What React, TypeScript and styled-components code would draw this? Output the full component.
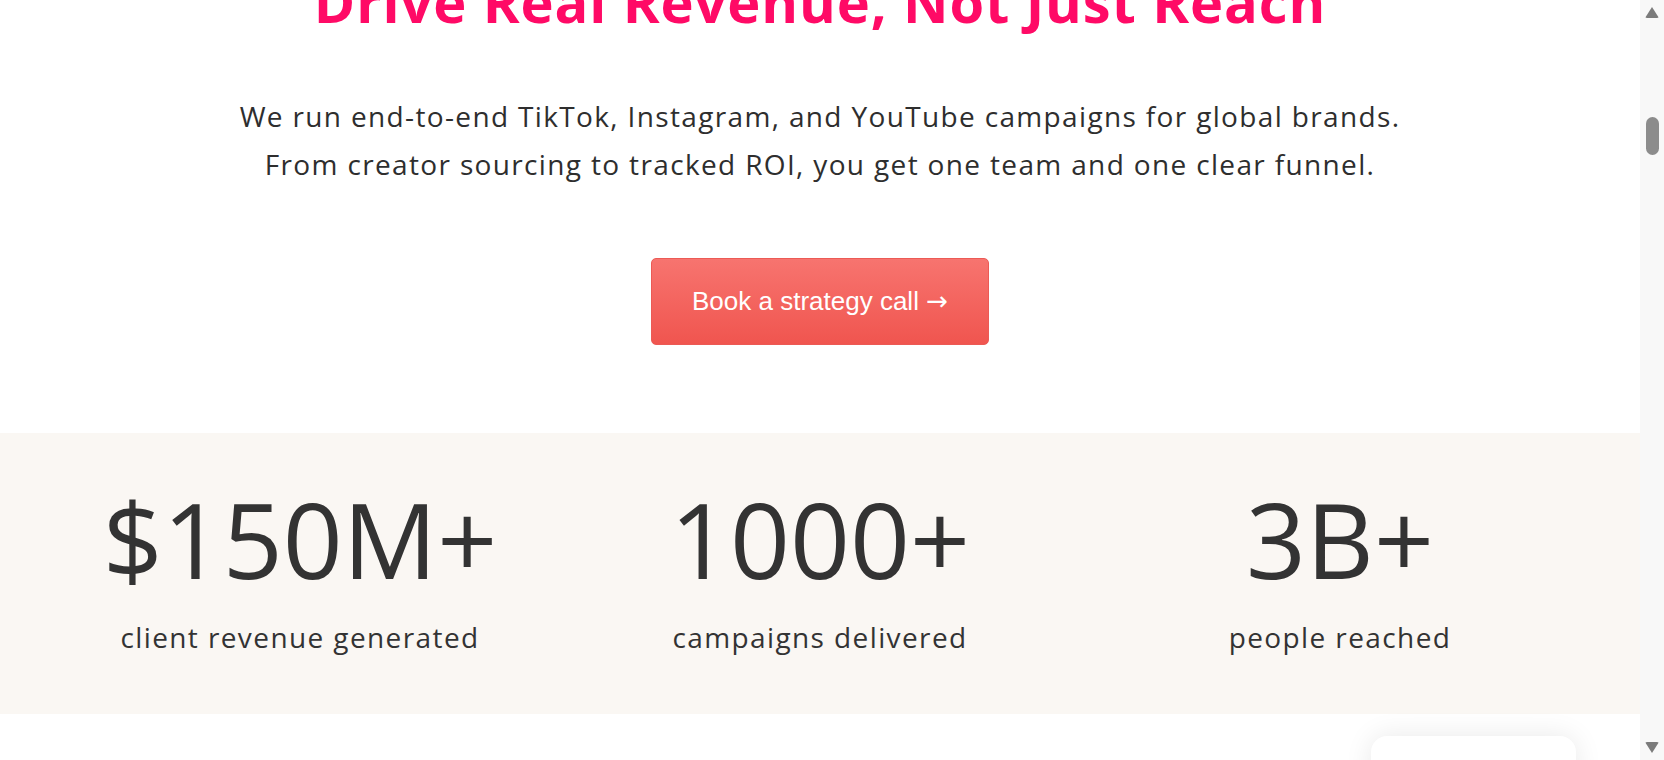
import React from "react";
import styled, { createGlobalStyle } from "styled-components";

const Global = createGlobalStyle`
  html, body {
    margin: 0;
    padding: 0;
    background: #ffffff;
    overflow: hidden;
  }
  body {
    font-family: "Open Sans", "Noto Sans", Arial, sans-serif;
    color: #333333;
  }
  * { box-sizing: border-box; }
`;

const Frame = styled.div`
  display: flex;
  width: 100%;
  height: 760px;
  overflow: hidden;
`;

const Main = styled.main`
  position: relative;
  flex: 1;
  min-width: 0;
  overflow: hidden;
`;

/* scroll offset of the page: the heading is partly above the fold */
const Page = styled.div`
  margin-top: -32px;
`;

const Hero = styled.section`
  display: flex;
  flex-direction: column;
  align-items: center;
  padding-bottom: 88px;
`;

const Title = styled.h1`
  margin: 0;
  font-family: "Open Sans", "Noto Sans", sans-serif;
  font-weight: 700;
  font-size: 56px;
  line-height: 67px;
  letter-spacing: 0.9px;
  color: #ff0a66;
  text-align: center;
`;

const Lead = styled.p`
  margin: 57px 0 0;
  font-size: 28px;
  line-height: 48px;
  font-weight: 400;
  letter-spacing: 1.35px;
  color: #2e2e2e;
  text-align: center;
`;

const CTA = styled.button`
  margin-top: 70px;
  padding: 28px 40px;
  border: 1px solid #ec5a55;
  border-radius: 5px;
  background: linear-gradient(180deg, #f7746f 0%, #f0554f 100%);
  color: #ffffff;
  font-family: "Liberation Sans", Arial, sans-serif;
  font-size: 26px;
  line-height: 29px;
  cursor: pointer;
`;

const CTAArrow = styled.span`
  font-family: "DejaVu Sans", sans-serif;
  font-size: 26px;
`;

const StatsBand = styled.section`
  background: #faf7f3;
`;

const StatsGrid = styled.div`
  display: grid;
  grid-template-columns: repeat(3, 1fr);
  max-width: 1560px;
  margin: 0 auto;
  padding: 43px 0 57px;
`;

const Stat = styled.div`
  display: flex;
  flex-direction: column;
  align-items: center;
  text-align: center;
`;

const StatValue = styled.div`
  font-size: 105px;
  line-height: 126px;
  font-weight: 400;
  color: #333333;
`;

const StatLabel = styled.div`
  margin-top: 16px;
  font-size: 28px;
  line-height: 39px;
  letter-spacing: 1.4px;
  color: #333333;
`;

const NextSection = styled.section`
  height: 200px;
  background: #ffffff;
`;

const Widget = styled.div`
  position: absolute;
  right: 64px;
  top: 736px;
  width: 205px;
  height: 80px;
  background: #ffffff;
  border-radius: 16px;
  box-shadow: 0 0 28px rgba(0, 0, 0, 0.09);
`;

const ScrollTrack = styled.div`
  width: 24px;
  flex: 0 0 24px;
  background: #f8f8f8;
  display: flex;
  flex-direction: column;
  align-items: center;
  padding-top: 7px;
`;

const Arrow = styled.div<{ $down?: boolean }>`
  width: 0;
  height: 0;
  border-left: 7px solid transparent;
  border-right: 7px solid transparent;
  ${(p) =>
    p.$down
      ? `border-top: 11px solid #7b7b7b;`
      : `border-bottom: 11px solid #7b7b7b;`}
  border-radius: 2px;
`;

const Thumb = styled.div`
  margin-top: 99px;
  width: 13px;
  height: 38px;
  border-radius: 7px;
  background: #8c8c8c;
`;

const TrackSpacer = styled.div`
  flex: 1;
`;

const BottomArrowWrap = styled.div`
  padding-bottom: 7px;
`;

const stats = [
  { value: "$150M+", label: "client revenue generated" },
  { value: "1000+", label: "campaigns delivered" },
  { value: "3B+", label: "people reached" },
];

export default function App() {
  return (
    <>
      <Global />
      <Frame>
        <Main>
          <Page>
            <Hero>
              <Title>Drive Real Revenue, Not Just Reach</Title>
              <Lead>
                We run end-to-end TikTok, Instagram, and YouTube campaigns for global brands.
                <br />
                From creator sourcing to tracked ROI, you get one team and one clear funnel.
              </Lead>
              <CTA>
                Book a strategy call <CTAArrow>→</CTAArrow>
              </CTA>
            </Hero>
            <StatsBand>
              <StatsGrid>
                {stats.map((s) => (
                  <Stat key={s.label}>
                    <StatValue>{s.value}</StatValue>
                    <StatLabel>{s.label}</StatLabel>
                  </Stat>
                ))}
              </StatsGrid>
            </StatsBand>
            <NextSection />
          </Page>
          <Widget />
        </Main>
        <ScrollTrack>
          <Arrow />
          <Thumb />
          <TrackSpacer />
          <BottomArrowWrap>
            <Arrow $down />
          </BottomArrowWrap>
        </ScrollTrack>
      </Frame>
    </>
  );
}
